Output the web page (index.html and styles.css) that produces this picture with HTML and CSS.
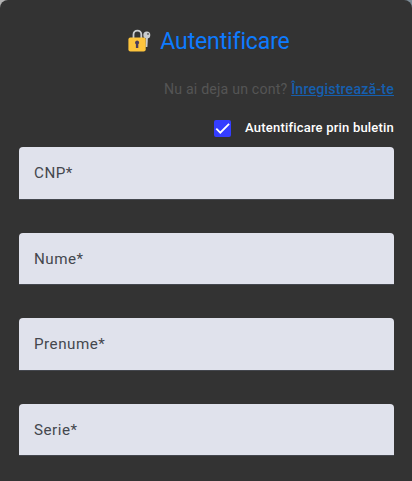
FILE: index.html
```html
<!DOCTYPE html>
<html lang="ro">
<head>
<meta charset="utf-8">
<title>Autentificare</title>
<link rel="stylesheet" href="styles.css">
</head>
<body>
<main class="card">
  <h1 class="title">
    <svg class="lock" viewBox="0 0 24 24" aria-hidden="true">
      <path d="M5.500 10V5.500a3.900 3.900 0 0 1 7.800 0V10" fill="none" stroke="#c9cccf" stroke-width="1.800"/>
      <path d="M19 7l-.6 11" stroke="#c9cccf" stroke-width="2"/>
      <circle cx="18.800" cy="6" r="3.500" fill="#c9cccf"/>
      <circle cx="20" cy="4.900" r=".9" fill="#555"/>
      <rect x=".4" y="8.600" width="17.300" height="14" rx="2" fill="#fdc43c"/>
      <path d="M9.100 11.500a2.100 2.100 0 0 1 1.200 3.800V19H7.900v-3.700A2.100 2.100 0 0 1 9.100 11.500" fill="#4b3c5c"/>
    </svg>
    <span>Autentificare</span>
  </h1>
  <p class="hint"><span class="question">Nu ai deja un cont?</span> <a class="link" href="#">Înregistrează-te</a></p>
  <div class="check">
    <span class="box"><svg viewBox="0 0 17 17" aria-hidden="true"><path d="M2.300 8.700l4 4 8.800-8.800" fill="none" stroke="#fff" stroke-width="1.800"/></svg></span>
    <span class="check-label">Autentificare prin buletin</span>
  </div>
  <div class="fields">
    <div class="field">CNP*</div>
    <div class="field">Nume*</div>
    <div class="field">Prenume*</div>
    <div class="field">Serie*</div>
  </div>
</main>
</body>
</html>
```
FILE: styles.css
```css
* { box-sizing: border-box; }
body {
  margin: 0;
  height: 481px;
  overflow: hidden;
  background: linear-gradient(90deg, #b3b3b3, #7c8b96);
  font-family: Roboto, sans-serif;
}
.card {
  height: 481px;
  padding: 26px 18px 0 19px;
  background: #333;
  border-radius: 8px 8px 0 0;
}
.title {
  display: flex;
  justify-content: center;
  align-items: center;
  gap: 8px;
  height: 30px;
  margin: 0;
  padding-left: 5px;
  color: #0d7bff;
  font-size: 23px;
  font-weight: 400;
  letter-spacing: -.13px;
}
.lock { width: 24px; height: 24px; }
.hint {
  height: 20px;
  margin: 23px 0 0;
  text-align: right;
  font-size: 14.2px;
  line-height: 20px;
  letter-spacing: .17px;
}
.question { color: #555; }
.link { color: #165fae; font-weight: 500; }
.check {
  display: flex;
  justify-content: flex-end;
  align-items: center;
  gap: 14px;
  height: 18px;
  margin-top: 20px;
  color: #fff;
  font-size: 13px;
  font-weight: 500;
  letter-spacing: .2px;
}
.check-label { margin-top: -2px; }
.box {
  display: flex;
  width: 17px;
  height: 17px;
  margin-top: 1px;
  background: #343dff;
  border-radius: 2px;
}
.box svg { width: 17px; height: 17px; }
.fields {
  display: grid;
  gap: 33.2px;
  margin-top: 10.3px;
}
.field {
  height: 52.3px;
  padding: 0 15px;
  background: #e0e2ec;
  border-bottom: 1px solid #44474e;
  border-radius: 4px 4px 0 0;
  color: #44474e;
  font-size: 15.2px;
  line-height: 52px;
  letter-spacing: .5px;
}
```
